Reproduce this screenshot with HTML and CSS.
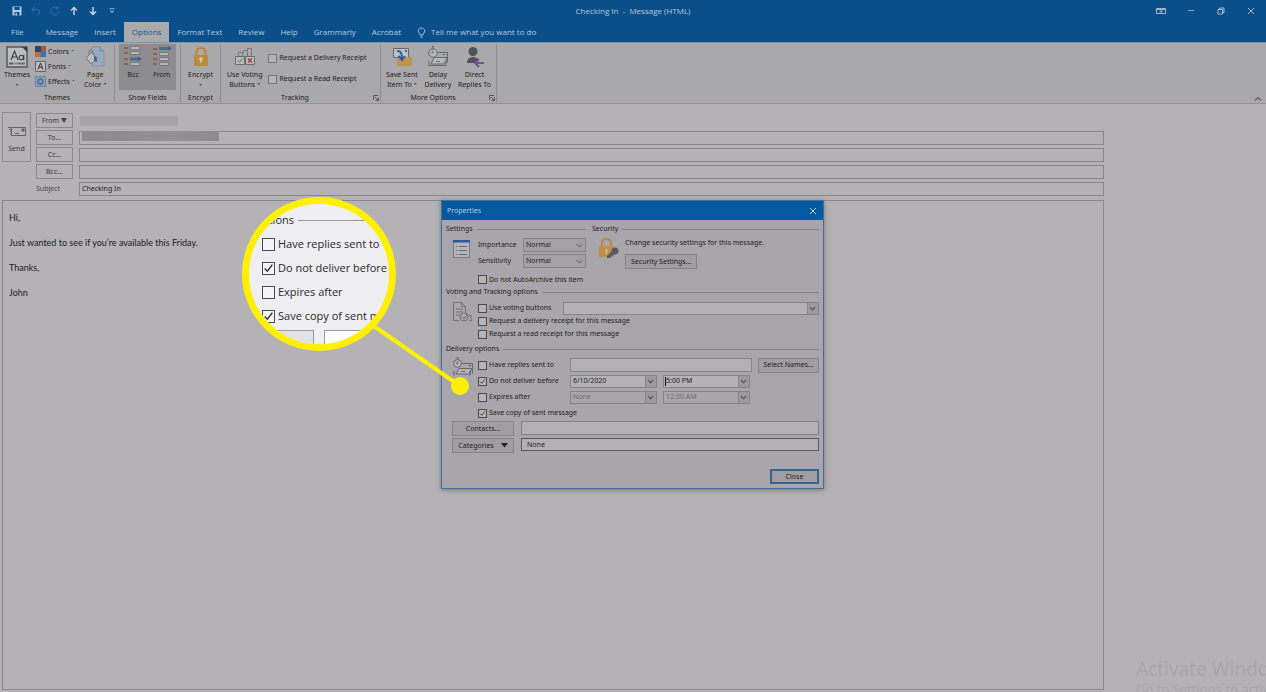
FILE: index.html
```html
<!DOCTYPE html>
<html lang="en">
<head>
<meta charset="utf-8">
<title>Checking In - Message (HTML)</title>
<link rel="stylesheet" href="styles.css">
</head>
<body>
<div class="window">
  <header class="header">
    <div class="titlebar">
      <div class="quick">
        <button class="icon-btn" aria-label="Save"><svg width="10" height="10" viewBox="0 0 10 10"><path d="M.5.5h9v9h-9z" fill="#b9cbdc"/><path d="M2.3 1h5.4v3H2.300z" fill="#0b4f8a"/><path d="M2.500 6h5v3.500h-5z" fill="#0b4f8a"/><path d="M3.500 7h1.500v2.500H3.500z" fill="#b9cbdc"/></svg></button>
        <button class="icon-btn" aria-label="Undo"><svg width="10" height="10" viewBox="0 0 10 10" fill="none" stroke="#3b70a3"><path d="M3.500 1 1 3.500 3.500 6M1 3.500h4.500q3 0 3 2.500T6 9"/></svg></button>
        <button class="icon-btn" aria-label="Redo"><svg width="10" height="10" viewBox="0 0 10 10" fill="none" stroke="#3169a0"><path d="M7.500 2A4 4 0 1 0 9 5M5.500 2.500H8V0"/></svg></button>
        <button class="icon-btn" aria-label="Previous item"><svg width="10" height="10" viewBox="0 0 10 10" fill="none" stroke="#c3d2df" stroke-width="1.500"><path d="M5 9V2M2 4.500 5 1.500l3 3"/></svg></button>
        <button class="icon-btn" aria-label="Next item"><svg width="10" height="10" viewBox="0 0 10 10" fill="none" stroke="#c3d2df" stroke-width="1.500"><path d="M5 1v7M2 5.500l3 3 3-3"/></svg></button>
        <button class="icon-btn" aria-label="Customize"><svg width="10" height="10" viewBox="0 0 10 10" fill="none" stroke="#7da0c1"><path d="M2.500 2.500h5M3 5l2 2 2-2z"/></svg></button>
      </div>
      <h1 class="title">Checking In&nbsp; -&nbsp; Message (HTML)</h1>
      <div class="controls">
        <button class="icon-btn" aria-label="Ribbon display options"><svg width="10" height="8" viewBox="0 0 10 8" fill="none" stroke="#9bb5cd"><path d="M.5 1.500h9v5h-9zM.5 2.500h9M5 6.500V3.500M3.500 5 5 3.500 6.500 5"/></svg></button>
        <button class="icon-btn" aria-label="Minimize"><svg width="10" height="8" viewBox="0 0 10 8" stroke="#86a7c5"><path d="M2 3.500h6"/></svg></button>
        <button class="icon-btn" aria-label="Restore"><svg width="10" height="8" viewBox="0 0 10 8" fill="none" stroke="#a5bdd2"><path d="M2 2.500h4.500V7H2zM3.500 2.500v-1.500H8v4.500H6.500"/></svg></button>
        <button class="icon-btn" aria-label="Close window"><svg width="10" height="8" viewBox="0 0 10 8" stroke="#a5bdd2"><path d="M2 1l6 6M8 1 2 7"/></svg></button>
      </div>
    </div>
    <nav class="tabs">
      <button class="tab file">File</button>
      <button class="tab">Message</button>
      <button class="tab">Insert</button>
      <button class="tab active">Options</button>
      <button class="tab">Format Text</button>
      <button class="tab">Review</button>
      <button class="tab">Help</button>
      <button class="tab">Grammarly</button>
      <button class="tab">Acrobat</button>
      <button class="tab tell"><svg width="9" height="11" viewBox="0 0 9 11" fill="none" stroke="#a8c0d5"><path d="M3 8V6.800C.2 4.800 1 1 4.500 1S8.800 4.800 6 6.800V8zM3.200 10h2.600"/></svg>Tell me what you want to do</button>
    </nav>
  </header>

  <section class="ribbon">
    <div class="group g-themes">
      <div class="tools">
        <button class="big"><svg width="22" height="22" viewBox="0 0 22 22"><path d="M1 1h20v20H1z" fill="#bdbcbe" stroke="#565a60" stroke-width="1.500"/><path d="m16 1 5 5V1z" fill="#343b46"/><path d="m5 14 3.500-9L12 14M6.200 11h4.600" fill="none" stroke="#363d48" stroke-width="1.100"/><circle cx="15.300" cy="11.500" r="2.200" fill="none" stroke="#363d48" stroke-width="1.100"/><path d="M17.800 9v5.300" stroke="#363d48" stroke-width="1.100"/><path d="M3 17.500h4" stroke="#38679b" stroke-width="2"/><path d="M7 17.500h4" stroke="#b08c49" stroke-width="2"/><path d="M11 17.500h4" stroke="#747474" stroke-width="2"/><path d="M15 17.500h4" stroke="#4c824f" stroke-width="2"/></svg><span>Themes</span><i class="caret"></i></button>
        <div class="stack">
          <button class="small"><svg width="11" height="11" viewBox="0 0 11 11"><path d="M0 0h6v6H0z" fill="#274676"/><path d="M6 0h5v6H6z" fill="#a4573b"/><path d="M0 6h6v5H0z" fill="#b66e47"/><path d="M6 6h5v5H6z" fill="#3a70a7"/></svg><span>Colors<i class="caret"></i></span></button>
          <button class="small"><svg width="11" height="11" viewBox="0 0 11 11" fill="none"><path d="M.5.5h10v10H.5z" fill="#bbb" stroke="#666"/><path d="m3 8.500 2.500-6.500L8 8.500M4 6.300h3" stroke="#333"/></svg><span>Fonts<i class="caret"></i></span></button>
          <button class="small"><svg width="11" height="11" viewBox="0 0 11 11"><path d="M.5.5h10v10H.5z" fill="#91a4b8" stroke="#6c83a0"/><path d="m5.500 1.500 1.200 1.300 1.800-.2-.2 1.800 1.200 1.200-1.200 1.200.2 1.800-1.800-.2-1.200 1.200-1.200-1.200-1.800.2.2-1.800-1.200-1.200 1.200-1.200-.2-1.800 1.800.2z" fill="#4a74a6"/><circle cx="5.500" cy="5.500" r="1.500" fill="#87a2c0"/></svg><span>Effects<i class="caret"></i></span></button>
        </div>
        <button class="big two"><svg width="22" height="22" viewBox="0 0 22 22" fill="none"><path d="M8 1h8l4 4v15H8z" fill="#96aabd" stroke="#7f95ab"/><path d="M16 1v4h4" stroke="#6e879f"/><path d="m2 12 6-6 5 6-6 6z" fill="#bdbcc0" stroke="#777"/><path d="M5 9V5q2-3 4 0v4" stroke="#777"/><path d="M10 10q3 0 3 6-3 0-3-3z" fill="#35649a"/></svg><span>Page<br>Color<i class="caret"></i></span></button>
      </div>
      <div class="caption">Themes</div>
    </div>
    <div class="group g-fields">
      <div class="tools pressed">
        <button class="big" aria-pressed="true"><svg width="20" height="20" viewBox="0 0 20 20" fill="none"><path d="M1 2h4M1 7h4M1 13h4M1 18h4" stroke="#994f38" stroke-width="1.500"/><path d="M7.500.5h9v3h-9zM7.500 5.500h9v3h-9z" fill="#b7b7b8" stroke="#77797c"/><path d="M7 11.500h9v3H7z" fill="#4a6c91"/><path d="m15 10.500 4 2.500-4 2.500z" fill="#3a638f"/><path d="M7.500 16.500h9v3h-9z" fill="#b7b7b8" stroke="#77797c"/></svg><span>Bcc</span></button>
        <button class="big" aria-pressed="true"><svg width="20" height="20" viewBox="0 0 20 20" fill="none"><path d="M1 3h4M1 8h4M1 13h4M1 18h4" stroke="#994f38" stroke-width="1.500"/><path d="M7 1h10v3H7z" fill="#4a6c91"/><path d="m16 0 4 2.500-4 2.500z" fill="#3a638f"/><path d="M7.500 6.500h9v3h-9zM7.500 11.500h9v3h-9zM7.500 16.500h9v3h-9z" fill="#b7b7b8" stroke="#77797c"/></svg><span>From</span></button>
      </div>
      <div class="caption">Show Fields</div>
    </div>
    <div class="group g-encrypt">
      <div class="tools">
        <button class="big"><svg width="18" height="22" viewBox="0 0 18 22"><path d="M4.500 9V6q0-4 4.500-4t4.500 4v3" fill="none" stroke="#b5873f" stroke-width="2"/><path d="M2 9h14v11H2z" fill="#b98b43"/><circle cx="9" cy="13" r="1.800" fill="#dcc9a9"/><path d="M9 14v3" stroke="#dcc9a9" stroke-width="1.500"/></svg><span>Encrypt</span><i class="caret"></i></button>
      </div>
      <div class="caption">Encrypt</div>
    </div>
    <div class="group g-tracking">
      <div class="tools">
        <button class="big two"><svg width="22" height="22" viewBox="0 0 22 22" fill="none"><path d="M1.500 10.500h9v8h-9zM11.500 10.500h9v8h-9z" fill="#bbb" stroke="#6a6d70"/><path d="M4.500 10V6.500h4V10M13.500 10V2.500h4V10M9.500 7V4.500h3" stroke="#77797c"/><path d="m3.500 14.500 2 2 3-4" stroke="#477a58"/><path d="m14 12.500 4 4m0-4-4 4" stroke="#a33e37" stroke-width="1.400"/></svg><span>Use Voting<br>Buttons<i class="caret"></i></span></button>
        <div class="checks">
          <label><input type="checkbox">Request a Delivery Receipt</label>
          <label><input type="checkbox">Request a Read Receipt</label>
        </div>
      </div>
      <div class="caption left">Tracking</div>
      <button class="launcher" aria-label="Tracking options"><svg width="6" height="6" viewBox="0 0 6 6" fill="none" stroke="#555"><path d="M.5 5V.5H5M2 2l3 3M5.500 2.500v3h-3"/></svg></button>
    </div>
    <div class="group g-more">
      <div class="tools">
        <button class="big two"><svg width="22" height="22" viewBox="0 0 22 22" fill="none"><path d="M2.500 2.500h15v9h-15z" fill="#c0c0c2" stroke="#64676a"/><path d="M14 4h2v2h-2z" fill="#3a6897"/><path d="M6 20v-7h6l2-2h7v9z" fill="#bd944f"/><path d="M6 5c4 0 5 2 5 8M7.500 10l3.500 4 3-4" stroke="#285f9b" stroke-width="2"/></svg><span>Save Sent<br>Item To<i class="caret"></i></span></button>
        <button class="big two"><svg width="22" height="22" viewBox="0 0 22 22" fill="none" stroke="#65686c"><path d="M10 6.500h10.500v10" /><path d="M7 11.500 4 18h13l3-6.500z" fill="#b9b9bb"/><path d="M9 15.500h4M2 15v4.500h17V15M16 8.500h2"/><circle cx="6" cy="7" r="4.200" fill="#b9b9bb"/><path d="M5 .5h2M6 1v2M6 4.500V7H4"/></svg><span>Delay<br>Delivery</span></button>
        <button class="big two"><svg width="22" height="22" viewBox="0 0 22 22"><circle cx="9" cy="5.500" r="4.500" fill="#505255"/><path d="M3 17q0-6 6-6 4 0 6 3l-2 3z" fill="#505255"/><path d="M20 17h-9m4-4-4 4 4 4" fill="none" stroke="#785092" stroke-width="2"/></svg><span>Direct<br>Replies To</span></button>
      </div>
      <div class="caption left">More Options</div>
      <button class="launcher" aria-label="More options dialog"><svg width="6" height="6" viewBox="0 0 6 6" fill="none" stroke="#555"><path d="M.5 5V.5H5M2 2l3 3M5.500 2.500v3h-3"/></svg></button>
    </div>
    <button class="collapse" aria-label="Collapse ribbon"><svg width="8" height="6" viewBox="0 0 8 6" fill="none" stroke="#666" stroke-width="1.300"><path d="m1 4.500 3-3 3 3"/></svg></button>
  </section>

  <main class="compose">
    <div class="envelope">
      <button class="send"><svg width="18" height="11" viewBox="0 0 18 11" fill="none" stroke="#626166"><path d="M3.500 1.500h14v8h-14zM0 1.500h3M1 3.500h2M2 5.500h1M2 8.500h2M7 7.500h4"/><path d="M14 3h2v2h-2z" fill="#555"/></svg>Send</button>
      <div class="fields">
        <button class="addr">From<svg width="6" height="5" viewBox="0 0 6 5"><path d="M0 0h6L3 5z" fill="#444"/></svg></button>
        <div class="value"><span class="redacted light"></span></div>
        <button class="addr">To...</button>
        <div class="value"><input type="text" class="line" aria-label="To"><span class="redacted dark"></span></div>
        <button class="addr">Cc...</button>
        <div class="value"><input type="text" class="line" aria-label="Cc"></div>
        <button class="addr">Bcc...</button>
        <div class="value"><input type="text" class="line" aria-label="Bcc"></div>
        <label class="subject" for="subject">Subject</label>
        <div class="value"><input type="text" class="line" id="subject" value="Checking In"></div>
      </div>
    </div>
    <article class="message">
      <p>Hi,</p>
      <p>Just wanted to see if you’re available this Friday.</p>
      <p>Thanks,</p>
      <p>John</p>
    </article>
  </main>
</div>

<div class="watermark"><strong>Activate Windows</strong><span>Go to Settings to activate Windows.</span></div>

<section class="dialog" role="dialog" aria-labelledby="dlg">
  <div class="dlg-title"><h2 id="dlg">Properties</h2><button class="icon-btn" aria-label="Close dialog"><svg width="8" height="8" viewBox="0 0 8 8" stroke="#bfd0df"><path d="m1 1 6 6M7 1 1 7"/></svg></button></div>
  <div class="dlg-body">
    <div class="split">
      <div class="settings">
        <h3 class="legend">Settings</h3>
        <div class="with-icon">
          <svg class="pic" width="18" height="20" viewBox="0 0 18 20" fill="none"><path d="M.5 1.500h16v17H.5z" fill="#b5b5b9" stroke="#777c84"/><path d="M0 1h17v2.500H0z" fill="#28598f"/><path d="M3 7.500h1.500M3 11.500h1.500M3 15.500h1.500M6 7.500h8M6 11.500h8M6 15.500h8" stroke="#5a6b80"/></svg>
          <div class="pairs">
            <label for="imp">Importance</label><select id="imp"><option>Normal</option></select>
            <label for="sens">Sensitivity</label><select id="sens"><option>Normal</option></select>
            <label class="check wide"><input type="checkbox">Do not AutoArchive this item</label>
          </div>
        </div>
      </div>
      <div class="security">
        <h3 class="legend">Security</h3>
        <div class="with-icon">
          <svg class="pic" width="22" height="22" viewBox="0 0 22 22"><path d="M4 9V6q0-4 4.500-4T13 6v3" fill="none" stroke="#b68b45" stroke-width="2"/><path d="M1 9h15v11H1z" fill="#bd9148"/><path d="M8.500 12v5" stroke="#dac39a" stroke-width="1.500"/><circle cx="17" cy="14" r="3.500" fill="#5a5b60"/><path d="m14 14-5 5v2h3l5-4z" fill="#5a5b60"/></svg>
          <div class="sec-col"><p>Change security settings for this message.</p><button class="btn">Security Settings...</button></div>
        </div>
      </div>
    </div>
    <h3 class="legend">Voting and Tracking options</h3>
    <div class="with-icon voting">
      <svg class="pic" width="22" height="22" viewBox="0 0 22 22" fill="none" stroke="#717276"><path d="M1.500 19.500v-18h8l4 4v7M9.500 1.500v4h4M1.500 19.500h6M4 8h7M4 11h7M4 14h4"/><circle cx="12" cy="16" r="4"/><path d="m10 16 2 2 4-6M17 14l3 1-2 2 2 2-3 1"/></svg>
      <div class="rows">
        <div class="row vote"><label class="check"><input type="checkbox">Use voting buttons</label><select class="combo" aria-label="Voting buttons"><option></option></select></div>
        <label class="check"><input type="checkbox">Request a delivery receipt for this message</label>
        <label class="check"><input type="checkbox">Request a read receipt for this message</label>
      </div>
    </div>
    <h3 class="legend">Delivery options</h3>
    <div class="with-icon delivery">
      <svg class="pic" width="22" height="22" viewBox="0 0 22 22" fill="none" stroke="#65676d"><path d="M10 7.500h10.500v10"/><path d="M7 12.500 4 18h13l3-5.500z" fill="#b5b5b9"/><path d="M9 15.500h4"/><path d="M2 15v4.500M18 15v4.500M17 9.500h2" stroke="#315e90"/><circle cx="5.500" cy="7.500" r="4" fill="#b0b0b4"/><path d="M4.500 1.500h2M5.500 2v1.500M5.500 5v2.500H4"/></svg>
      <div class="options">
        <label class="check"><input type="checkbox">Have replies sent to</label>
        <div class="row"><input type="text" class="field grow" aria-label="Have replies sent to"><button class="btn names">Select Names...</button></div>
        <label class="check"><input type="checkbox" checked>Do not deliver before</label>
        <div class="row dates"><select class="combo" aria-label="Deliver date"><option>6/10/2020</option></select><div class="time"><select class="combo" aria-label="Deliver time"><option>5:00 PM</option></select><span class="cursor"></span></div></div>
        <label class="check"><input type="checkbox">Expires after</label>
        <div class="row dates"><select class="combo off" aria-label="Expiry date" disabled><option>None</option></select><div class="time"><select class="combo off" aria-label="Expiry time" disabled><option>12:00 AM</option></select></div></div>
        <label class="check wide"><input type="checkbox" checked>Save copy of sent message</label>
      </div>
    </div>
    <div class="links">
      <button class="btn">Contacts...</button><input type="text" class="field" aria-label="Contacts">
      <button class="btn">Categories<svg width="7" height="5" viewBox="0 0 7 5"><path d="M0 0h7L3.500 4.500z" fill="#222"/></svg></button><input type="text" class="field strong" aria-label="Categories" value="None">
    </div>
    <div class="footer"><button class="btn close">Close</button></div>
  </div>
</section>

<svg class="pointer" width="110" height="84" viewBox="0 0 110 84"><path d="m8 10 92 64" stroke="#fdf005" stroke-width="4"/><circle cx="100" cy="74" r="9" fill="#fdf005"/></svg>
<aside class="lens">
  <div class="lens-legend">Delivery options</div>
  <label class="zoom"><input type="checkbox">Have replies sent to</label>
  <label class="zoom"><input type="checkbox" checked>Do not deliver before</label>
  <label class="zoom"><input type="checkbox">Expires after</label>
  <label class="zoom"><input type="checkbox" checked>Save copy of sent message</label>
  <div class="lens-boxes"><span></span><span></span></div>
</aside>
</body>
</html>
```
FILE: styles.css
```css
* { box-sizing: border-box; }
body { margin: 0; background: #b4b2b5; color: #1d1c20; font: 7px/10px "Noto Sans", "Open Sans", sans-serif; overflow: hidden; }
h1, h2, h3, p { margin: 0; font: inherit; }
button, input, select { font: inherit; color: inherit; margin: 0; padding: 0; border: 0; border-radius: 0; background: none; }
svg { display: block; flex: none; }
input[type="checkbox"] { appearance: none; flex: none; width: 9px; height: 9px; border: 1px solid #49484c; background: #b5b4b7; }
input[type="checkbox"]:checked { background: #b5b4b7 url("data:image/svg+xml,%3Csvg xmlns='http://www.w3.org/2000/svg' viewBox='0 0 10 10'%3E%3Cpath d='m1.500 5 2.500 2.500 4.500-6' fill='none' stroke='%23333' stroke-width='1.300'/%3E%3C/svg%3E") center / 100% no-repeat; }

.window { min-height: 100vh; display: flex; flex-direction: column; }
.header { background: #0b4f8a; color: #b7cadb; border-bottom: 1px solid #7896b3; height: 43px; font-family: "Open Sans", sans-serif; font-size: 8px; }
.titlebar { display: grid; grid-template-columns: 1fr auto 1fr; align-items: center; height: 22px; }
.quick { display: flex; gap: 9px; padding-left: 12px; }
.icon-btn { display: grid; place-items: center; }
.controls { display: flex; justify-content: flex-end; gap: 20px; padding-right: 10px; }
.tabs { display: flex; height: 20px; padding-left: 3px; }
.tab { padding: 0 8px; white-space: nowrap; }
.file { margin-right: 6px; }
.active { background: #aaaaac; color: #17568f; }
.tell { display: flex; align-items: center; gap: 5px; }

.ribbon { display: flex; position: relative; height: 61px; background: #a9a9ab; border-bottom: 1px solid #929194; }
.group { position: relative; display: flex; flex-direction: column; justify-content: space-between; border-right: 1px solid #8e8d90; margin: 1px 0; }
.g-themes { width: 115px; }
.g-fields { width: 66px; padding-left: 4px; padding-right: 4px; }
.g-encrypt { width: 40px; }
.g-tracking { width: 160px; }
.g-more { width: 116px; }
.tools { display: flex; height: 46px; padding-top: 2px; }
.g-themes .tools { gap: 5px; padding-left: 4px; }
.g-encrypt .tools { justify-content: center; }
.g-tracking .tools { gap: 5px; padding-left: 6px; }
.g-more .tools { justify-content: space-between; padding: 2px 5px; }
.pressed { justify-content: space-around; background: #8d8d8f; }
.big { display: flex; flex-direction: column; align-items: center; gap: 2px; line-height: 10px; white-space: nowrap; }
.pressed .big { gap: 4px; }
.caret { display: inline-block; width: 3px; height: 2px; margin-left: 2px; background: #555; clip-path: polygon(0 0, 100% 0, 50% 100%); vertical-align: 2px; }
.big > .caret { margin: 2px 0 0; }
.stack { display: flex; flex-direction: column; gap: 4px; }
.small { display: flex; align-items: center; gap: 2px; height: 11px; }
.g-themes .two { margin-left: 4px; }
.caption { text-align: center; line-height: 9px; }
.left { padding-right: 11px; }
.checks { display: flex; flex-direction: column; gap: 11px; padding-top: 7px; white-space: nowrap; }
.checks label { display: flex; align-items: center; gap: 3px; }
.checks input[type="checkbox"] { border-color: #77767a; }
.launcher { position: absolute; right: 1px; bottom: 1px; }
.collapse { position: absolute; right: 4px; bottom: 1px; }

.compose { flex: 1; display: flex; flex-direction: column; margin: 8px 162px 2px 2px; }
.envelope { display: flex; gap: 5px; }
.send { display: flex; flex-direction: column; align-items: center; justify-content: center; gap: 7px; width: 29px; height: 50px; padding-top: 6px; border: 1px solid #8e8c90; color: #38373b; }
.fields { flex: 1; display: grid; grid-template-columns: 37px 1fr; grid-auto-rows: 15px; gap: 2px 6px; padding-top: 1px; }
.addr { display: flex; align-items: center; justify-content: center; gap: 2px; border: 1px solid #8a888c; color: #38373b; }
.subject { color: #48474b; line-height: 15px; }
.value { position: relative; display: flex; align-items: center; }
.line { width: 100%; height: 14px; padding: 0 2px; border: 1px solid #88868a; }
.redacted { height: 10px; }
.light { width: 98px; margin-left: 1px; background: #a5a3a6; }
.dark { position: absolute; left: 3px; top: 1px; width: 137px; background: linear-gradient(90deg, #8a898c, #929194 65%, #8d8c8f); }
.message { flex: 1; margin-top: 4px; padding: 11px 6px; border: 1px solid #89878b; font-family: Lato, sans-serif; font-size: 9px; line-height: 12px; color: #1a191d; }
.message p { margin-bottom: 13px; }

.watermark { position: fixed; left: calc(100% - 130px); right: 0; bottom: -6px; display: flex; flex-direction: column; overflow: hidden; white-space: nowrap; color: #a7a5a9; }
.watermark strong { font-size: 19px; font-weight: 400; line-height: 22px; }
.watermark span { font-size: 13px; line-height: 18px; }

.dialog { position: absolute; left: 441px; top: 200px; width: 383px; border: 1px solid #3a709b; background: #a8a6aa; box-shadow: 0 1px 5px #77757a; }
.dlg-title { display: flex; justify-content: space-between; align-items: center; height: 19px; padding: 0 6px 0 5px; background: #045a9f; color: #b9cddd; }
.dlg-body { padding: 3px 4px 4px; white-space: nowrap; }
.split { display: flex; gap: 6px; height: 63px; }
.settings { width: 140px; }
.security { flex: 1; }
.legend { display: flex; align-items: center; gap: 4px; line-height: 12px; height: 12px; }
.legend::after { content: ""; flex: 1; height: 1px; background: #858388; }
.with-icon { display: flex; }
.settings .pic { margin: 4px 7px 0 7px; }
.security .pic { margin: 2px 5px 0 6px; }
.pairs { flex: 1; display: grid; grid-template-columns: 45px 1fr; grid-auto-rows: 16px; align-items: center; padding-top: 2px; }
.pairs .wide { margin-top: 5px; }
.wide { grid-column: 1 / -1; }
.check { display: flex; align-items: center; gap: 2px; }
select { appearance: none; height: 14px; padding: 0 14px 0 2px; border: 1px solid #858388; background: #a3a1a5 url("data:image/svg+xml,%3Csvg xmlns='http://www.w3.org/2000/svg' width='7' height='5' viewBox='0 0 7 5'%3E%3Cpath d='m.5 1 3 3 3-3' fill='none' stroke='%23555'/%3E%3C/svg%3E") right 2px center no-repeat; opacity: 1; }
.sec-col { display: flex; flex-direction: column; align-items: flex-start; gap: 6px; padding-top: 3px; }
.btn { display: flex; align-items: center; justify-content: center; gap: 7px; height: 15px; padding: 0 5px; border: 1px solid #858388; background: #a09ea2; }
.voting .pic { margin: 3px 4px 0 6px; }
.voting { height: 45px; }
.rows { flex: 1; display: flex; flex-direction: column; gap: 3px; padding-top: 3px; }
.row { display: flex; align-items: center; }
.vote { height: 14px; margin-bottom: -2px; }
.vote .check { width: 85px; }
.combo { flex: 1; min-width: 0; height: 13px; background-color: #b4b2b6; }
.combo { background-image: url("data:image/svg+xml,%3Csvg xmlns='http://www.w3.org/2000/svg' width='11' height='12' viewBox='0 0 11 12'%3E%3Cpath d='M0 0h11v12H0z' fill='%239c9a9e'/%3E%3Cpath d='M.5 0v12' stroke='%23858388'/%3E%3Cpath d='m3 4.500 2.500 2.500L8 4.500' fill='none' stroke='%23444'/%3E%3C/svg%3E"); background-position: right center; }
.delivery .pic { margin: 1px 4px 0 6px; }
.options { flex: 1; display: grid; grid-template-columns: 86px 1fr; grid-auto-rows: 16px; column-gap: 6px; padding-top: 2px; }
.field { height: 14px; padding: 0 5px; border: 1px solid #858388; background: #b3b1b5; min-width: 0; }
.grow { flex: 1; }
.names { width: 61px; margin-left: 6px; }
.dates { display: grid; grid-template-columns: 1fr 1fr; width: 180px; gap: 6px; }
.time { position: relative; display: flex; }
.off { color: #6e6c71; background-color: #a8a6aa; opacity: 1; }
.cursor { position: absolute; left: 2px; top: 2px; width: 1px; height: 9px; background: #111; }
.links { display: grid; grid-template-columns: 62px 1fr; gap: 2px 7px; margin-left: 6px; }
.strong { border-color: #59575c; height: 13px; }
.footer { display: flex; justify-content: flex-end; padding-top: 16px; }
.close { width: 49px; border: 2px solid #34658d; }

.pointer { position: absolute; left: 360px; top: 312px; }
.lens { position: absolute; left: 242px; top: 197px; width: 154px; height: 154px; padding: 10px 0 0 13px; border: 7px solid #fdf005; border-radius: 50%; overflow: hidden; background: #efeef1; color: #29282c; font-family: "Open Sans", sans-serif; font-size: 11px; white-space: nowrap; }
.lens-legend { display: flex; justify-content: flex-end; align-items: center; width: 110px; height: 12px; margin: 0 0 6px -78px; line-height: 12px; }
.lens-legend::after { content: ""; flex: none; width: 90px; height: 1px; margin: 0 -94px 0 4px; background: #999; }
.zoom { display: flex; align-items: center; gap: 3px; height: 24px; }
.zoom input[type="checkbox"] { width: 13px; height: 13px; background-color: #f5f4f7; }
.lens-boxes { display: flex; gap: 10px; margin-top: 2px; }
.lens-boxes span { flex: none; width: 52px; height: 20px; border: 1px solid #999; background: #e2e1e4; }
.lens-boxes span + span { width: 80px; background: #fff; }
```
